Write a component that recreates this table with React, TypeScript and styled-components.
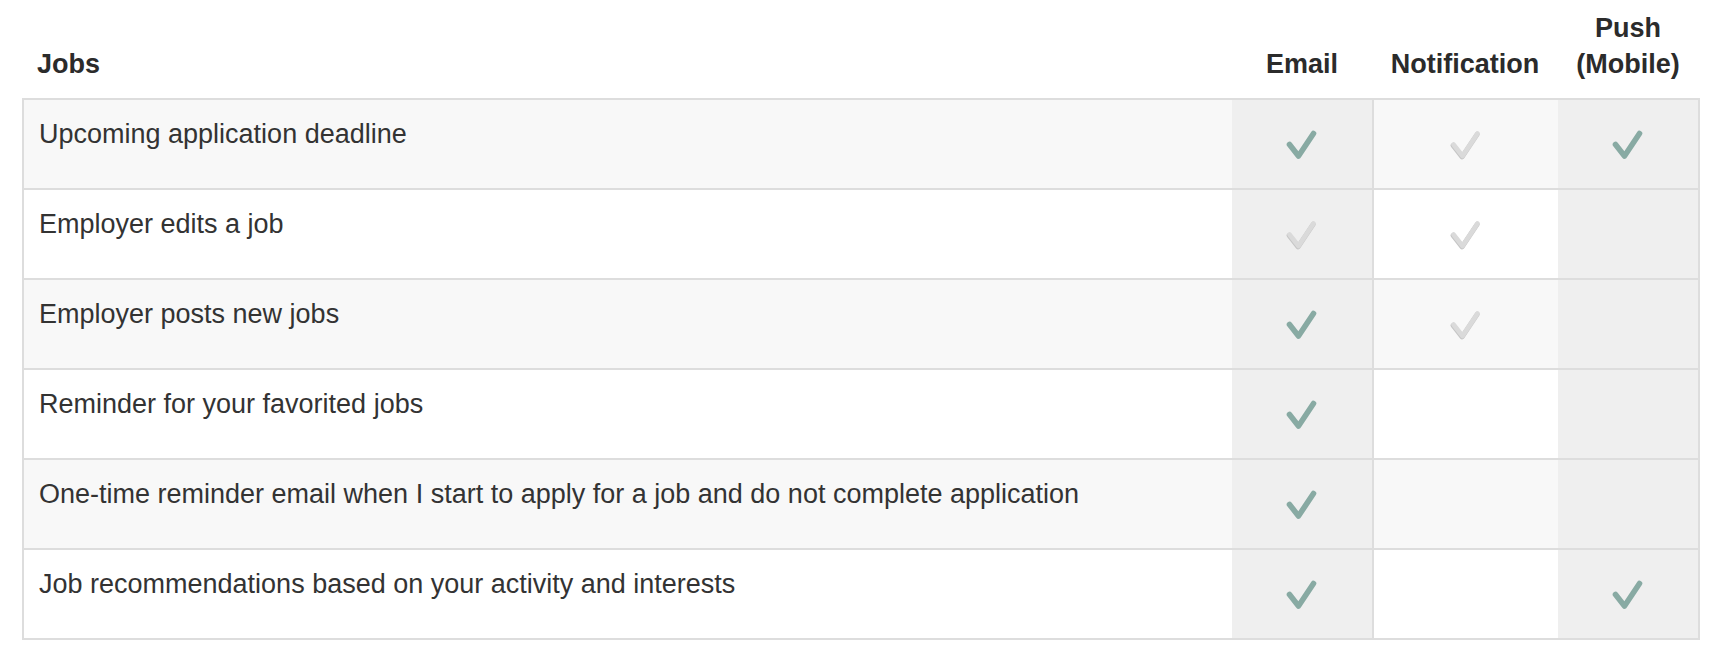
import React from "react";
import styled, { createGlobalStyle } from "styled-components";

const GlobalStyle = createGlobalStyle`
  html, body { margin: 0; padding: 0; background: #ffffff; }
  body { font-family: "Liberation Sans", Arial, sans-serif; color: #333333; }
`;

const COLUMNS = "1fr 140px 186px 140px";

const Page = styled.div`
  padding: 10px 20px 10px 22px;
`;

const HeaderRow = styled.div`
  display: grid;
  grid-template-columns: ${COLUMNS};
  align-items: end;
  padding: 0 2px 16px 2px;
`;

const HeaderCell = styled.div<{ $center?: boolean }>`
  font-size: 27px;
  line-height: 36px;
  font-weight: 700;
  color: #2b2b2b;
  text-align: ${(p) => (p.$center ? "center" : "left")};
  padding-left: ${(p) => (p.$center ? "0" : "13px")};
`;

const Table = styled.div`
  border: 2px solid #dddddd;
`;

const Row = styled.div<{ $striped: boolean }>`
  display: grid;
  grid-template-columns: ${COLUMNS};
  min-height: 88px;
  background: ${(p) => (p.$striped ? "#f8f8f8" : "#ffffff")};
  & + & {
    border-top: 2px solid #dddddd;
  }
`;

const LabelCell = styled.div`
  padding: 16px 15px;
  font-size: 27px;
  line-height: 36px;
  color: #333333;
`;

const ChannelCell = styled.div<{ $shaded?: boolean; $divider?: boolean }>`
  display: flex;
  align-items: center;
  justify-content: center;
  background: ${(p) => (p.$shaded ? "#efefef" : "transparent")};
  border-left: ${(p) => (p.$divider ? "2px solid #dddddd" : "none")};
`;

type State = "on" | "off" | null;

const Check: React.FC<{ state: State }> = ({ state }) => {
  if (!state) return null;
  const on = state === "on";
  return (
    <svg width="32" height="32" viewBox="0 0 32 32" aria-hidden="true">
      {!on && (
        <path
          d="M3.5 16.5 L12.5 28 L27.5 5.5"
          fill="none"
          stroke="#c6c6c6"
          strokeWidth="5"
          strokeLinecap="round"
          strokeLinejoin="round"
          transform="translate(-0.4 0.9)"
        />
      )}
      <path
        d="M3.5 16.5 L12.5 28 L27.5 5.5"
        fill="none"
        stroke={on ? "#88aaa3" : "#dadada"}
        strokeWidth={on ? 5.6 : 4.6}
        strokeLinecap="round"
        strokeLinejoin="round"
      />
    </svg>
  );
};

const rows: { label: string; email: State; notif: State; push: State }[] = [
  { label: "Upcoming application deadline", email: "on", notif: "off", push: "on" },
  { label: "Employer edits a job", email: "off", notif: "off", push: null },
  { label: "Employer posts new jobs", email: "on", notif: "off", push: null },
  { label: "Reminder for your favorited jobs", email: "on", notif: null, push: null },
  {
    label:
      "One-time reminder email when I start to apply for a job and do not complete application",
    email: "on",
    notif: null,
    push: null,
  },
  {
    label: "Job recommendations based on your activity and interests",
    email: "on",
    notif: null,
    push: "on",
  },
];

export default function App() {
  return (
    <>
      <GlobalStyle />
      <Page>
        <HeaderRow>
          <HeaderCell>Jobs</HeaderCell>
          <HeaderCell $center>Email</HeaderCell>
          <HeaderCell $center>Notification</HeaderCell>
          <HeaderCell $center>
            Push
            <br />
            (Mobile)
          </HeaderCell>
        </HeaderRow>
        <Table>
          {rows.map((r, i) => (
            <Row key={r.label} $striped={i % 2 === 0}>
              <LabelCell>{r.label}</LabelCell>
              <ChannelCell $shaded>
                <Check state={r.email} />
              </ChannelCell>
              <ChannelCell $divider>
                <Check state={r.notif} />
              </ChannelCell>
              <ChannelCell $shaded>
                <Check state={r.push} />
              </ChannelCell>
            </Row>
          ))}
        </Table>
      </Page>
    </>
  );
}
